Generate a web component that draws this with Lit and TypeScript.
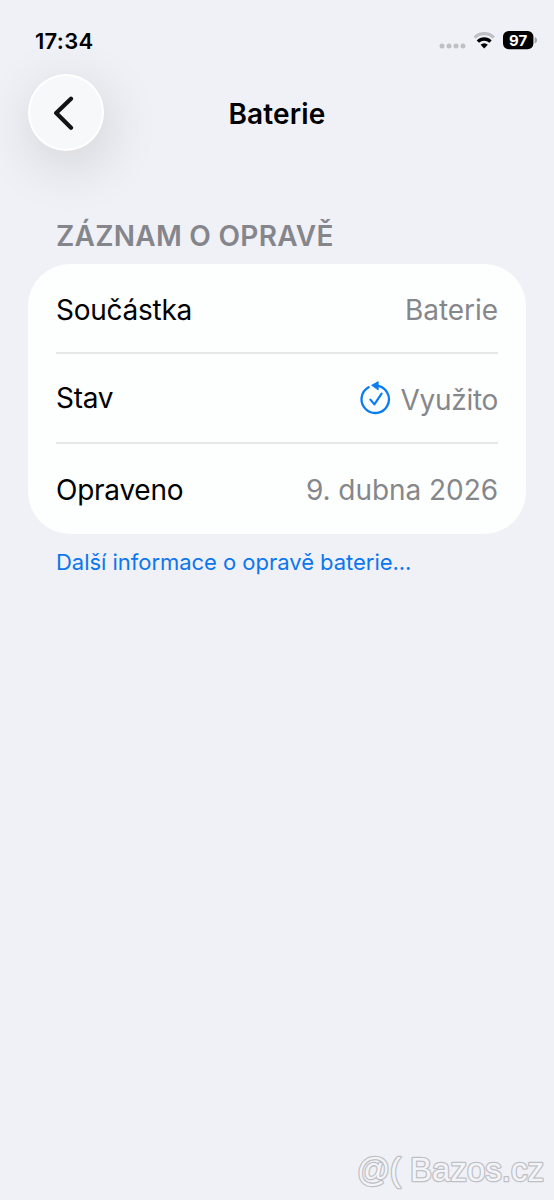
import { LitElement, html, css, svg } from "lit";
import { customElement } from "lit/decorators.js";

const repairIcon = svg`
  <path d="M18.2 4.9 A13.7 13.7 0 1 1 8.6 6.3" fill="none" stroke="#0a7df2" stroke-width="2.3" stroke-linecap="round"/>
  <path d="M11.6 4.3 L18.2 0.6 V9 Z" fill="#0a7df2" stroke="#0a7df2" stroke-width=".8" stroke-linejoin="round"/>
  <path d="M10.4 18.6 L14.4 23.4 L21.6 12.6" fill="none" stroke="#0a7df2" stroke-width="2.2" stroke-linecap="round" stroke-linejoin="round"/>`;

@customElement("app-root")
export class AppRoot extends LitElement {
  static styles = css`
    :host {
      display: flex;
      flex-direction: column;
      box-sizing: border-box;
      height: 1200px;
      background: #f0f1f6;
      font-family: Inter, "Liberation Sans", sans-serif;
      color: #000;
      overflow: hidden;
      white-space: nowrap;
    }
    .status {
      display: flex;
      align-items: center;
      height: 74px;
      padding: 6px 17px 0 35px;
      box-sizing: border-box;
    }
    .time {
      font-size: 22px;
      font-weight: 600;
      letter-spacing: 0.3px;
      padding-top: 2px;
      flex: 1;
    }
    .indicators { display: block; }
    .pct { font: 700 15px Inter, sans-serif; }
    .nav {
      display: grid;
      grid-template-columns: 77px 1fr 77px;
      align-items: center;
      height: 77px;
      padding: 0 28px;
    }
    .back {
      width: 76px;
      height: 77px;
      box-sizing: border-box;
      border: 2px solid #fff;
      border-radius: 50%;
      background: #f6f8fa;
      box-shadow: 4px 14px 56px rgba(0, 0, 0, 0.14);
      padding: 0;
      display: grid;
      place-items: center;
    }
    .title {
      margin: 0;
      padding-top: 2px;
      text-align: center;
      font-size: 28px;
      line-height: 34px;
      font-weight: 600;
      letter-spacing: 0.15px;
    }
    .section {
      margin: 66px 56px 0;
      font-size: 28px;
      line-height: 38px;
      height: 47px;
      font-weight: 600;
      letter-spacing: 0.28px;
      color: #85868b;
    }
    .card {
      margin: 0 28px;
      height: 270px;
      box-sizing: border-box;
      padding: 0 28px;
      background: #fdfefe;
      border-radius: 42px;
      display: grid;
      grid-template-rows: 90px 90px 90px;
      font-size: 28px;
      letter-spacing: -0.25px;
    }
    .row {
      display: flex;
      align-items: center;
      justify-content: space-between;
      box-sizing: border-box;
      padding-top: 3px;
      border-bottom: 2px solid #e5e7e8;
    }
    .row.state { padding-top: 0; }
    .row:last-child { border: 0; padding-top: 2px; }
    .value {
      display: flex;
      align-items: center;
      gap: 9px;
      color: #86878a;
      letter-spacing: -0.05px;
    }
    .used {
      padding-top: 4px;
      letter-spacing: -0.3px;
    }
    .link {
      margin: 13px 56px 0;
      font-size: 22px;
      line-height: 30px;
      letter-spacing: -0.03px;
      color: #0b76ed;
    }
    .mark {
      margin: auto 0 0 auto;
      display: block;
    }
    .marktext {
      font: 33.5px "Liberation Sans", Arial, sans-serif;
      fill: #f3f4f8;
      stroke: #bfc0c4;
      stroke-width: 2.6px;
      paint-order: stroke;
      stroke-linejoin: round;
    }
  `;

  render() {
    return html`
      <div class="status">
        <span class="time">17:34</span>
        <svg class="indicators" width="98" height="20" viewBox="439 30 98 20">
          <g fill="#bfc0c4">
            <circle cx="442" cy="46" r="2.5"/><circle cx="449" cy="46" r="2.5"/>
            <circle cx="456" cy="46" r="2.5"/><circle cx="463" cy="46" r="2.5"/>
          </g>
          <path d="M474.6 37.6 A13.8 13.8 0 0 1 493.8 37.6" fill="none" stroke="#bfc0c4" stroke-width="3.2"/>
          <path d="M477.9 41.6 A8.9 8.9 0 0 1 490.5 41.6" fill="none" stroke="#000" stroke-width="3.3"/>
          <path d="M484.2 48.4 L480.6 44.8 A5 5 0 0 1 487.8 44.8 Z" fill="#000"/>
          <rect x="503" y="31" width="30.4" height="18.2" rx="5.6"/>
          <path d="M535 37.5 A3 3 0 0 1 535 43 Z" fill="#a5a6aa" stroke="#a5a6aa" stroke-width=".8"/>
          <text class="pct" x="518.2" y="45.8" text-anchor="middle" fill="#fff">97</text>
        </svg>
      </div>
      <div class="nav">
        <button class="back" aria-label="Zpět">
          <svg width="24" height="36" viewBox="54 94.5 24 36">
            <path d="M71 98.2 L56.2 112.6 L71 127.2" fill="none" stroke="#111315" stroke-width="4.2" stroke-linecap="round" stroke-linejoin="round"/>
          </svg>
        </button>
        <h1 class="title">Baterie</h1>
      </div>
      <div class="section">ZÁZNAM O OPRAVĚ</div>
      <div class="card">
        <div class="row"><span>Součástka</span><span class="value">Baterie</span></div>
        <div class="row state"><span>Stav</span>
          <span class="value"><svg width="32" height="34" viewBox="0 0 32 34">${repairIcon}</svg><span class="used">Využito</span></span>
        </div>
        <div class="row"><span>Opraveno</span><span class="value">9. dubna 2026</span></div>
      </div>
      <div class="link">Další informace o opravě baterie...</div>
      <svg class="mark" width="200" height="50" viewBox="354 1150 200 50">
        <text class="marktext" x="357" y="1181" textLength="44" lengthAdjust="spacingAndGlyphs">@(</text>
        <text class="marktext" x="410" y="1181" textLength="134" lengthAdjust="spacingAndGlyphs">Bazos.cz</text>
      </svg>
    `;
  }
}
